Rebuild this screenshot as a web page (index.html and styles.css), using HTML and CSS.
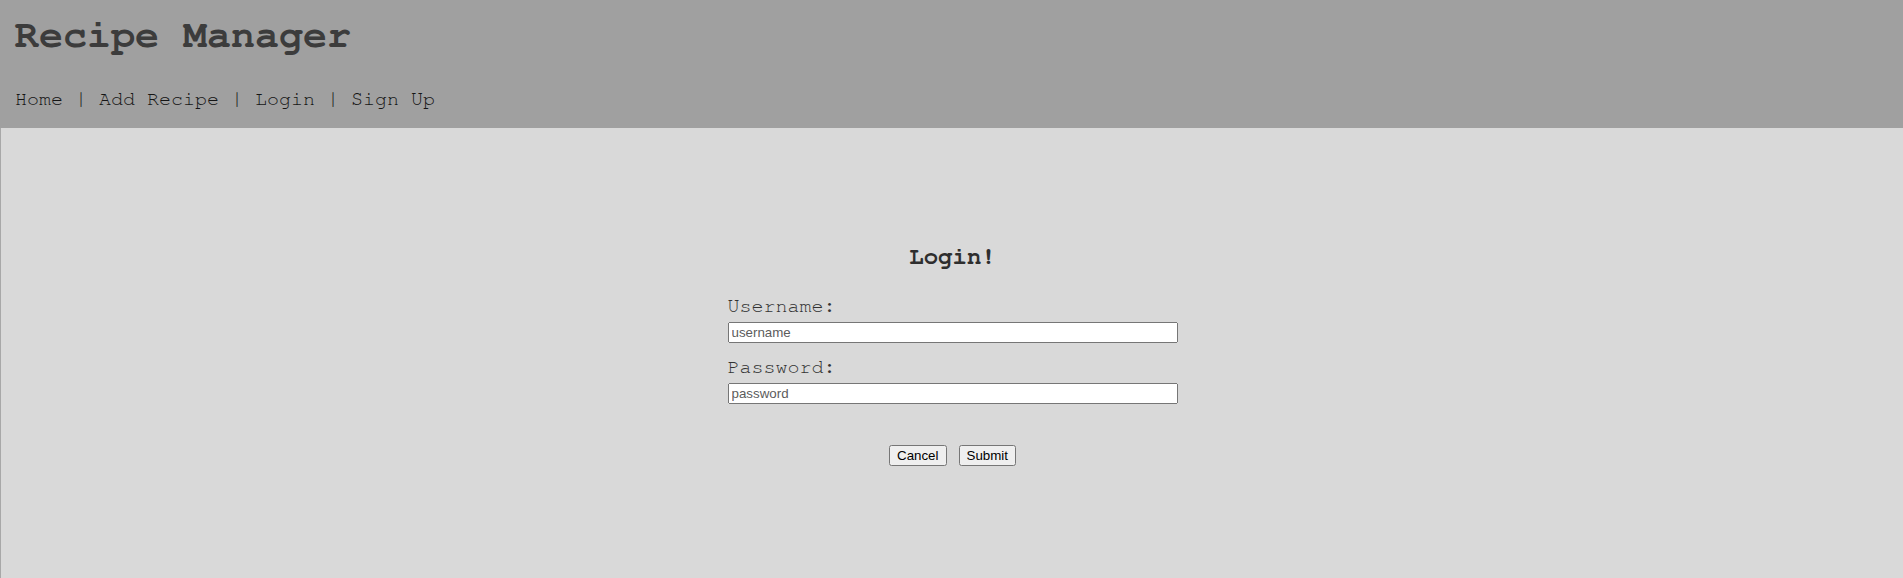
FILE: index.html
```html
<!DOCTYPE html>
<html lang="en">
<head>
<meta charset="utf-8">
<title>Recipe Manager</title>
<link rel="stylesheet" href="styles.css">
</head>
<body>
<header class="site-header">
  <h1 class="site-title">Recipe Manager</h1>
  <nav class="site-nav">Home | Add Recipe | Login | Sign Up</nav>
</header>
<main class="page">
  <form class="login-form">
    <h2 class="login-title">Login!</h2>
    <label class="field-label" for="username">Username:</label>
    <input class="field-input" id="username" type="text" placeholder="username">
    <label class="field-label" for="password">Password:</label>
    <input class="field-input" id="password" type="password" placeholder="password">
    <div class="actions">
      <button type="button" class="btn">Cancel</button>
      <button type="submit" class="btn">Submit</button>
    </div>
  </form>
</main>
</body>
</html>
```

FILE: styles.css
```css
html, body {
  margin: 0;
  padding: 0;
  height: 100%;
}
body {
  font-family: "Nimbus Mono PS", "Nimbus Mono L", "FreeMono", "Liberation Mono", "Courier New", monospace;
  background: #d9d9d9;
  display: flex;
  flex-direction: column;
}
.site-header {
  background: #a0a0a0;
  padding: 13px 15px 17px 15px;
  display: flex;
  flex-direction: column;
  gap: 30px;
}
.site-title {
  margin: 0;
  font-size: 40px;
  line-height: 45px;
  font-weight: bold;
  color: #3c3c3c;
}
.site-nav {
  font-size: 20px;
  line-height: 23px;
  color: #151515;
}
.page {
  flex: 1;
  border-left: 1px solid #a8a8a8;
  padding: 116px 0 0 1px;
  display: flex;
  justify-content: center;
  align-items: flex-start;
}
.login-form {
  width: 450px;
  display: flex;
  flex-direction: column;
}
.login-title {
  margin: 0 0 24px 0;
  text-align: center;
  font-size: 24px;
  line-height: 27px;
  font-weight: bold;
  color: #2e2e2e;
}
.field-label {
  font-size: 20px;
  line-height: 23px;
  color: #333333;
  margin-bottom: 4px;
}
.field-input {
  box-sizing: border-box;
  width: 100%;
  height: 21px;
  margin: 0 0 13px 0;
  font-family: "Liberation Sans", Arial, sans-serif;
  font-size: 13.33px;
}
.field-input::placeholder {
  color: #5c5c5c;
}
.actions {
  margin-top: 28px;
  display: flex;
  justify-content: center;
  gap: 12px;
}
.btn {
  font-family: "Liberation Sans", Arial, sans-serif;
  font-size: 13.33px;
}
```
